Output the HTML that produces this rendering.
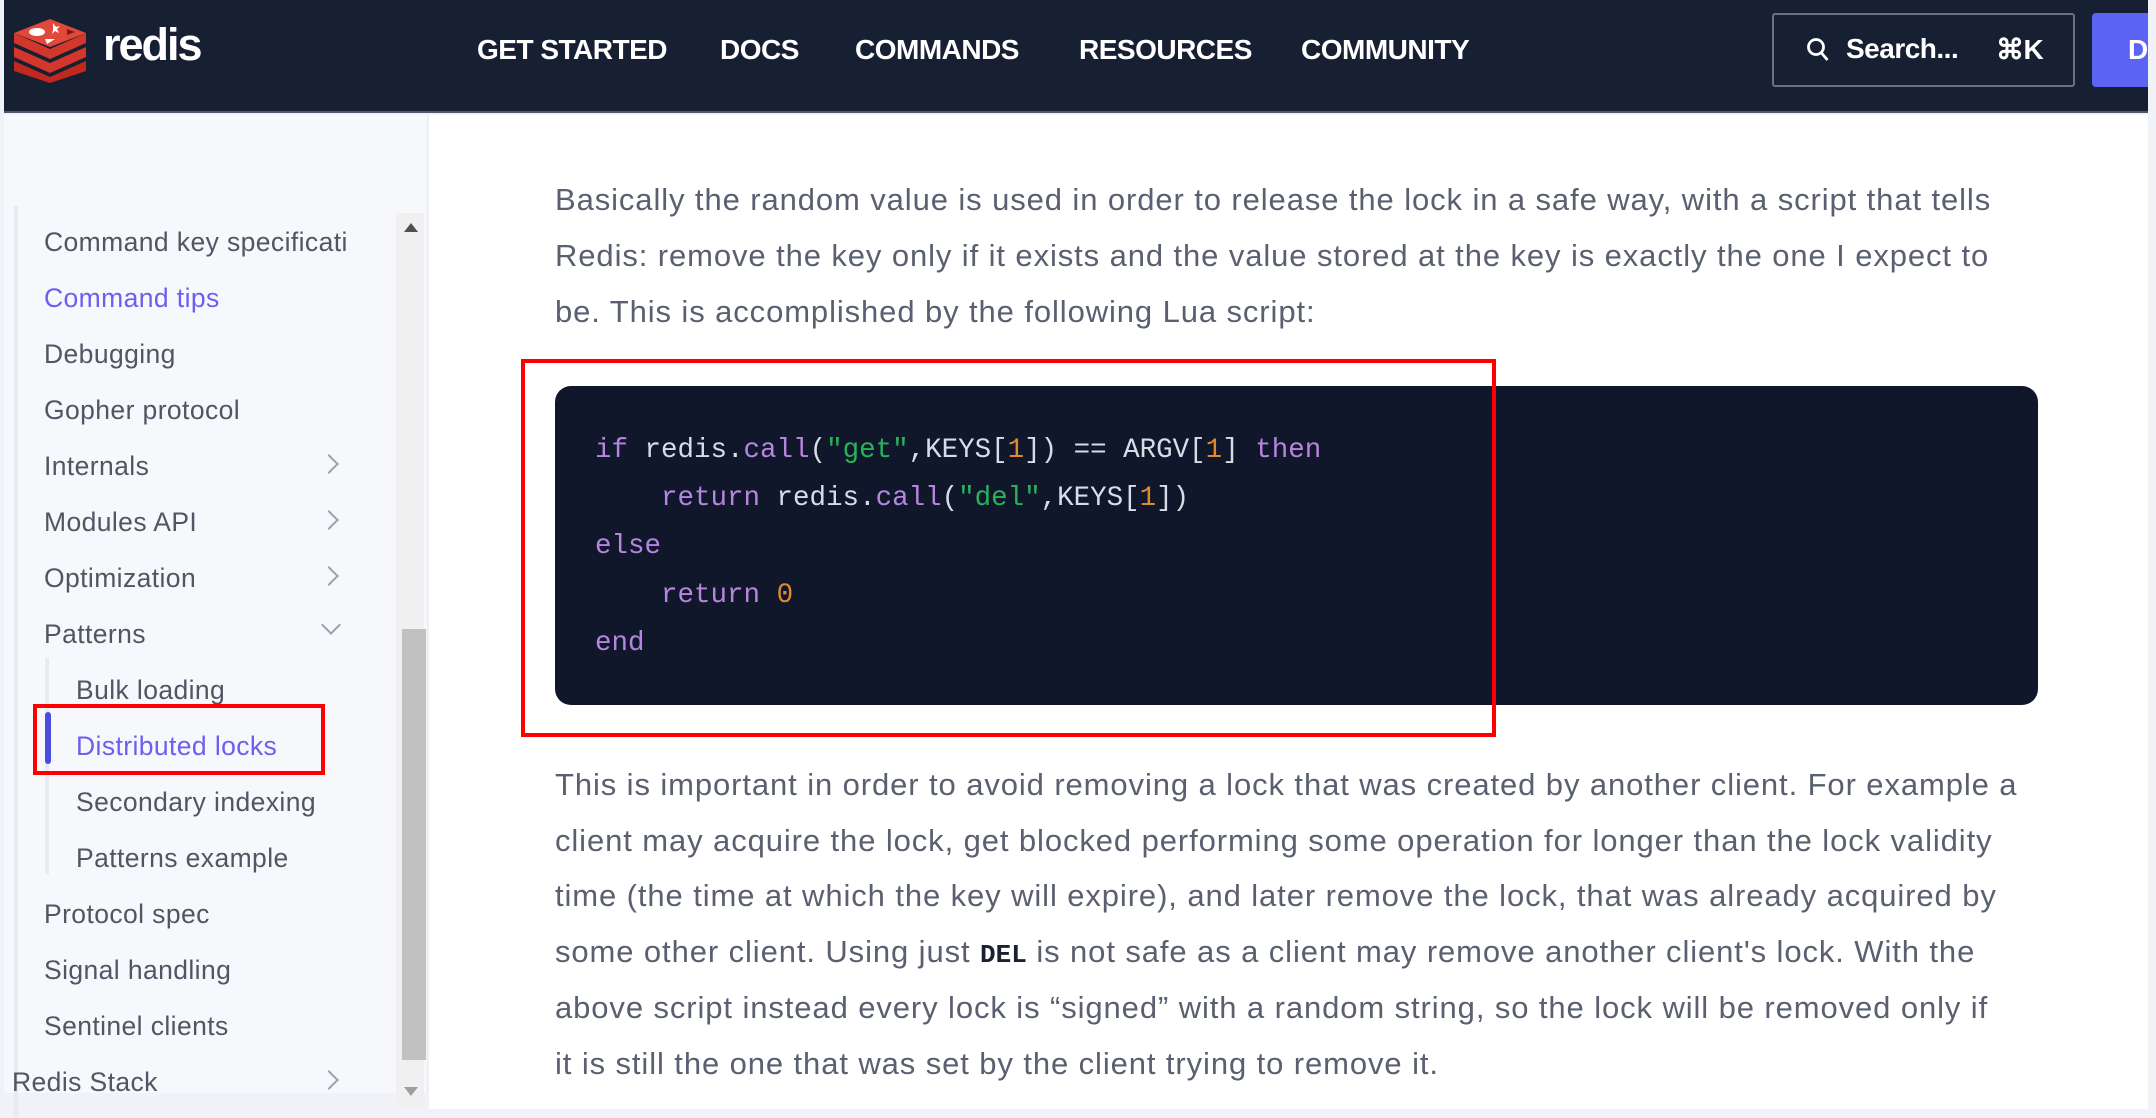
<!DOCTYPE html>
<html><head><meta charset="utf-8"><style>
*{margin:0;padding:0;box-sizing:border-box}
html,body{width:2156px;height:1118px;overflow:hidden}
body{background:#f0f2f7;font-family:"Liberation Sans",sans-serif;position:relative}
.hdr{position:absolute;left:4px;top:0;width:2144px;height:113px;background:#172032;border-bottom:2px solid #50576a;overflow:hidden}
.nav{position:absolute;top:34px;color:#fff;font-size:28px;font-weight:bold;letter-spacing:-0.5px}
.side{position:absolute;left:4px;top:115px;width:424px;height:978px;background:#f7f8fb;border-right:1px solid #e8eaf0}
.main{position:absolute;left:429px;top:115px;width:1719px;height:994px;background:#fff}
.si{position:absolute;font-size:26.5px;letter-spacing:0.4px;color:#505663;white-space:nowrap}
.chev{position:absolute;left:318px;width:14px;height:14px;border-right:2px solid #9aa0ad;border-bottom:2px solid #9aa0ad}
.p{position:absolute;left:555px;font-size:31px;letter-spacing:0.9px;color:#5a6070;white-space:nowrap}
.code{position:absolute;left:555px;top:386px;width:1483px;height:319px;background:#10172a;border-radius:16px}
.cl{position:absolute;left:40px;font-family:"Liberation Mono","DejaVu Sans Mono",monospace;font-size:27.5px;color:#d8dce6;white-space:pre}
.k{color:#b685e0}.s{color:#27b35a}.n{color:#e08a2c}
</style></head><body>
<div class="hdr">
<svg style="position:absolute;left:7px;top:17px" width="78" height="66" viewBox="0 0 78 66">
<path d="M3 44 L39 60 L75 44 L75 54 L39 66 L3 54Z" fill="#c3281e"/>
<path d="M3 30 L39 46 L75 30 L75 40 L39 56 L3 40Z" fill="#d3372b"/>
<path d="M3 16 L39 32 L75 16 L75 26 L39 42 L3 26Z" fill="#d3372b"/>
<path d="M3 16 L39 2 L75 16 L39 30Z" fill="#e0483a"/>
<ellipse cx="26" cy="15" rx="8" ry="4" fill="#fff"/><path d="M42 6l3 4 4-1-3 3 2 4-4-2-3 3 1-4z" fill="#fff"/><path d="M34 22l10 0-8 5z" fill="#fff"/><path d="M56 12l8 3-8 3z" fill="#7a1b14"/>
</svg>
<div style="position:absolute;left:99px;top:19px;color:#fff;font-size:45px;font-weight:bold;letter-spacing:-2px">redis</div>
<div class="nav" style="left:473px">GET STARTED</div>
<div class="nav" style="left:716px">DOCS</div>
<div class="nav" style="left:851px">COMMANDS</div>
<div class="nav" style="left:1075px">RESOURCES</div>
<div class="nav" style="left:1297px">COMMUNITY</div>
<div style="position:absolute;left:1768px;top:13px;width:303px;height:74px;border:2px solid #6a7080;border-radius:3px"></div>
<svg style="position:absolute;left:1802px;top:37px" width="26" height="28" viewBox="0 0 26 28"><circle cx="10" cy="10" r="7.5" fill="none" stroke="#fff" stroke-width="2.8"/><path d="M15.5 16l6 7" stroke="#fff" stroke-width="2.8"/></svg>
<div class="nav" style="left:1842px;top:33px">Search...</div>
<div class="nav" style="left:1992px;top:33px">⌘K</div>
<div style="position:absolute;left:2088px;top:13px;width:60px;height:74px;background:#5d63f2;border-radius:4px 0 0 4px;color:#fff;font-size:28px;font-weight:bold;padding:21px 0 0 36px;overflow:hidden">D</div>
</div>
<div class="side">
<div style="position:absolute;left:10px;top:91px;width:4px;height:955px;background:#e8ebf3"></div>
<div style="position:absolute;left:392px;top:98px;width:28px;height:894px;background:#f0f0f0"></div>
<div style="position:absolute;left:398px;top:514px;width:24px;height:431px;background:#c1c1c1"></div>
<div style="position:absolute;left:400px;top:108px;border:7px solid transparent;border-bottom:9px solid #505050;border-top:0"></div>
<div style="position:absolute;left:400px;top:972px;border:7px solid transparent;border-top:9px solid #a0a0a0;border-bottom:0"></div>
<div class="si" style="left:40px;top:112px">Command key specificati</div>
<div class="si" style="left:40px;top:168px;color:#6b5ff0">Command tips</div>
<div class="si" style="left:40px;top:224px">Debugging</div>
<div class="si" style="left:40px;top:280px">Gopher protocol</div>
<div class="si" style="left:40px;top:336px">Internals</div><div class="chev" style="top:342px;transform:rotate(-45deg)"></div>
<div class="si" style="left:40px;top:392px">Modules API</div><div class="chev" style="top:398px;transform:rotate(-45deg)"></div>
<div class="si" style="left:40px;top:448px">Optimization</div><div class="chev" style="top:454px;transform:rotate(-45deg)"></div>
<div class="si" style="left:40px;top:504px">Patterns</div><div class="chev" style="top:503px;left:320px;transform:rotate(45deg)"></div>
<div style="position:absolute;left:41px;top:543px;width:4px;height:216px;background:#e8ebf3"></div>
<div style="position:absolute;left:41px;top:597px;width:6px;height:52px;background:#4b4be0;border-radius:3px"></div>
<div class="si" style="left:72px;top:560px">Bulk loading</div>
<div class="si" style="left:72px;top:616px;color:#6b5ff0">Distributed locks</div>
<div class="si" style="left:72px;top:672px">Secondary indexing</div>
<div class="si" style="left:72px;top:728px">Patterns example</div>
<div class="si" style="left:40px;top:784px">Protocol spec</div>
<div class="si" style="left:40px;top:840px">Signal handling</div>
<div class="si" style="left:40px;top:896px">Sentinel clients</div>
<div class="si" style="left:8px;top:952px">Redis Stack</div><div class="chev" style="top:958px;transform:rotate(-45deg)"></div>
<div style="position:absolute;left:29px;top:589px;width:292px;height:71px;border:4px solid #f00"></div>
</div>
<div class="main"></div>
<div class="p" style="top:182px">Basically the random value is used in order to release the lock in a safe way, with a script that tells</div>
<div class="p" style="top:238px">Redis: remove the key only if it exists and the value stored at the key is exactly the one I expect to</div>
<div class="p" style="top:294px">be. This is accomplished by the following Lua script:</div>
<div class="code">
<div class="cl" style="top:49px"><span class="k">if</span> redis.<span class="k">call</span>(<span class="s">"get"</span>,KEYS[<span class="n">1</span>]) == ARGV[<span class="n">1</span>] <span class="k">then</span></div>
<div class="cl" style="top:97px">    <span class="k">return</span> redis.<span class="k">call</span>(<span class="s">"del"</span>,KEYS[<span class="n">1</span>])</div>
<div class="cl" style="top:145px"><span class="k">else</span></div>
<div class="cl" style="top:194px">    <span class="k">return</span> <span class="n">0</span></div>
<div class="cl" style="top:242px"><span class="k">end</span></div>
</div>
<div style="position:absolute;left:521px;top:359px;width:975px;height:378px;border:4px solid #f00"></div>
<div class="p" style="top:767px">This is important in order to avoid removing a lock that was created by another client. For example a</div>
<div class="p" style="top:823px">client may acquire the lock, get blocked performing some operation for longer than the lock validity</div>
<div class="p" style="top:878px">time (the time at which the key will expire), and later remove the lock, that was already acquired by</div>
<div class="p" style="top:934px">some other client. Using just <b style="font-family:'Liberation Mono',monospace;color:#1a2030;font-size:26px;letter-spacing:0">DEL</b> is not safe as a client may remove another client's lock. With the</div>
<div class="p" style="top:990px">above script instead every lock is “signed” with a random string, so the lock will be removed only if</div>
<div class="p" style="top:1046px">it is still the one that was set by the client trying to remove it.</div>
</body></html>
